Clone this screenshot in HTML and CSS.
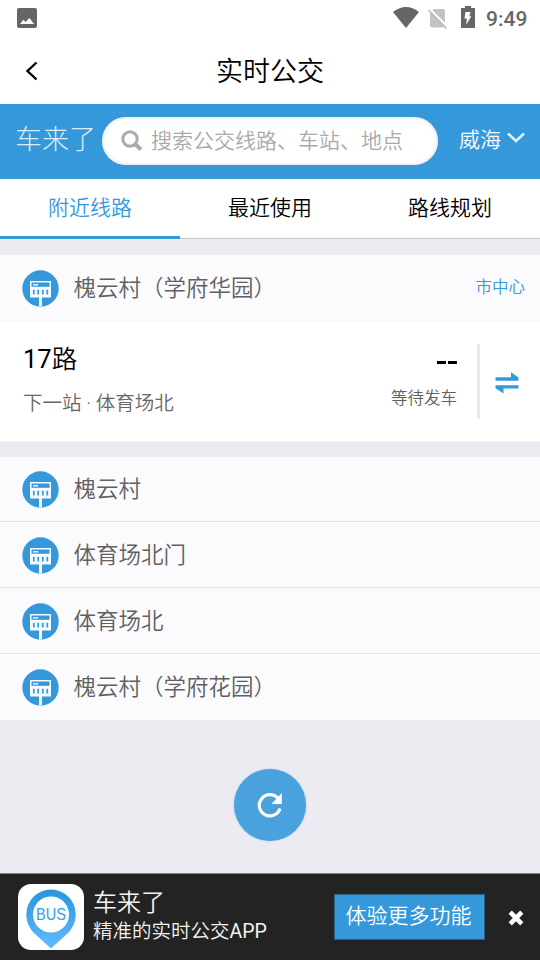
FILE: index.html
```
<!DOCTYPE html>
<html lang="zh-CN">
<head>
<meta charset="utf-8">
<title>实时公交</title>
<link rel="stylesheet" href="styles.css">
</head>
<body>
<svg width="0" height="0" class="defs">
  <symbol id="stop" viewBox="0 0 38 38">
    <circle cx="19.500" cy="19.500" r="18.2" fill="#3498db"/>
    <path d="M9 12h21v16.500h-9v9h-3v-9h-9z" fill="#f6fafe"/>
    <path d="M10.500 13.500h18v4.300h-18z" fill="#3498db"/>
    <path d="M12 15.800h5.200" stroke="#d9ecf9" stroke-width="1.600"/>
    <path d="M12.800 20.800v4.800M17.200 20.800v4.800M21.800 20.800v4.800M26.300 20.800v4.800" stroke="#3498db" stroke-width="1.700"/>
  </symbol>
</svg>
<header class="status">
  <svg class="photo" width="20" height="20" viewBox="0 0 20 20"><rect width="20" height="20" rx="2" fill="#666"/><path d="M3 16l3.500-4.200 2 2.200L12.500 10l4.500 6z" fill="#fff"/></svg>
  <div class="status-right">
    <svg width="26" height="21" viewBox="0 0 26 21"><path d="M0 5Q13-5 26 5L13 21z" fill="#666"/></svg>
    <svg class="sim" width="20" height="21" viewBox="0 0 20 21"><path d="M2 5l4-4h9q2 0 2 2v14.500q0 2-2 2H4q-2 0-2-2z" fill="#c3c3c3"/><path d="M1 .5L20 19.500" stroke="#fff" stroke-width="2.500"/><path d="M.5 2L18.500 20.500" stroke="#bdbdbd" stroke-width="1.700"/></svg>
    <svg class="battery" width="14" height="22" viewBox="0 0 14 22"><path d="M0 2h4V0h6v2h4v20H0z" fill="#666"/><path d="M4.500 6H9.500L8.300 10.200h2L5 19l1-6.500H3.500z" fill="#fff"/></svg>
    <span class="time">9:49</span>
  </div>
</header>
<div class="titlebar">
  <svg class="back" width="14" height="20" viewBox="0 0 14 20"><path d="M11.500 1.500L2.500 10l9 8.500" fill="none" stroke="#000" stroke-width="2.400"/></svg>
  <h1>实时公交</h1>
</div>
<div class="searchbar">
  <span class="logo">车来了</span>
  <div class="search">
    <svg width="22" height="22" viewBox="0 0 22 22" fill="none" stroke="#aaa"><circle cx="9" cy="9" r="7.200" stroke-width="3"/><path d="M14 14l6 5.500" stroke-width="4"/></svg>
    <span>搜索公交线路、车站、地点</span>
  </div>
  <span class="city">威海</span>
  <svg class="chevron" width="18" height="12" viewBox="0 0 18 12"><path d="M1 1.500l8 7.500 8-7.500" fill="none" stroke="#e3f1fb" stroke-width="2.500"/></svg>
</div>
<nav class="tabs">
  <span class="tab active">附近线路</span>
  <span class="tab">最近使用</span>
  <span class="tab">路线规划</span>
</nav>
<section class="group first">
  <div class="station head"><svg class="stop"><use href="#stop"/></svg><span class="name">槐云村（学府华园）</span><span class="toward">市中心</span></div>
  <div class="route">
    <div class="info"><div class="line"><span class="latin">17</span>路</div><div class="next">下一站 · 体育场北</div></div>
    <div class="eta"><div class="dash"><i></i><i></i></div><div class="wait">等待发车</div></div>
    <div class="swap"><svg width="24" height="22" viewBox="0 0 24 22" fill="#3498db"><path d="M.5 5.200H16V.300L23.500 5.500v3.200H.5zM23.500 13.200v3.200H8.500v5.100L.5 16.200v-3z"/></svg></div>
  </div>
</section>
<section class="group list">
  <div class="station"><svg class="stop"><use href="#stop"/></svg><span class="name">槐云村</span></div>
  <div class="station"><svg class="stop"><use href="#stop"/></svg><span class="name">体育场北门</span></div>
  <div class="station"><svg class="stop"><use href="#stop"/></svg><span class="name">体育场北</span></div>
  <div class="station"><svg class="stop"><use href="#stop"/></svg><span class="name">槐云村（学府花园）</span></div>
</section>
<div class="refresh">
  <svg width="28" height="28" viewBox="0 0 28 28"><path d="M22 7.500A10.600 10.600 0 1 0 24 17.500" fill="none" stroke="#fff" stroke-width="3.200"/><path d="M25.800 2v11H15.500z" fill="#fff"/></svg>
</div>
<footer class="banner">
  <svg class="app" width="66" height="66" viewBox="0 0 66 66">
    <defs><linearGradient id="pin" x1="0" y1="0" x2="0" y2="1"><stop offset="0" stop-color="#2796dc"/><stop offset="1" stop-color="#61bcff"/></linearGradient></defs>
    <rect width="66" height="66" rx="13" fill="#fff"/>
    <path d="M33 5.500A24.700 24.700 0 0 1 57.700 30.200C57.700 40 53 46 49 50L33 64.500 17 50C13 46 8.300 40 8.300 30.200A24.700 24.700 0 0 1 33 5.500z" fill="url(#pin)"/>
    <circle cx="33" cy="30.500" r="18" fill="#fff"/>
    <text x="33" y="36" text-anchor="middle" textLength="30" lengthAdjust="spacingAndGlyphs" class="bus">BUS</text>
  </svg>
  <div class="promo"><div class="promo-name">车来了</div><div class="promo-text">精准的实时公交<span class="latin">APP</span></div></div>
  <span class="more">体验更多功能</span>
  <svg class="close" width="16" height="16" viewBox="0 0 16 16"><path d="M2.200 2.200l11.600 11.600M13.800 2.200L2.200 13.800" stroke="#fff" stroke-width="4.600"/></svg>
</footer>
</body>
</html>
```
FILE: styles.css
```
* { box-sizing: border-box; }
body {
  margin: 0;
  width: 540px;
  height: 960px;
  display: flex;
  flex-direction: column;
  overflow: hidden;
  background: #ebebf1;
  font-family: Roboto, "Noto Sans CJK SC", sans-serif;
  font-weight: 350;
  color: #000;
  white-space: nowrap;
}
svg { display: block; flex: none; }
.defs { position: absolute; }
.latin { font-weight: 400; }
.status {
  height: 36px;
  background: #fff;
  display: flex;
  justify-content: space-between;
  padding: 0 12px 0 17px;
}
.photo { margin-top: 8px; }
.status-right { display: flex; padding-top: 7px; }
.sim { margin: 1px 0 0 9px; }
.battery { margin: -1px 0 0 13px; }
.time {
  margin-left: 11px;
  font-size: 21px;
  line-height: 24px;
  font-weight: 500;
  color: #666;
  width: 42px;
}
.titlebar {
  height: 68px;
  background: #fff;
  display: grid;
  grid-template-columns: 60px 1fr 60px;
  align-items: center;
}
.back { margin: 2px 0 0 25px; }
h1 { margin: 4px 0 0; font-size: 27px; line-height: 40px; font-weight: 350; text-align: center; }
.searchbar {
  height: 75px;
  background: #3498db;
  display: flex;
  align-items: flex-start;
  color: #fff;
}
.logo { width: 87px; margin: 16px 0 0 15px; font-size: 27px; line-height: 40px; color: #d8edfa; font-weight: 300; }
.search {
  width: 336px;
  height: 48px;
  margin-top: 13px;
  border-radius: 24px;
  background: #fff;
  box-shadow: inset 0 0 4px #d8d8d8;
  display: flex;
  align-items: center;
  gap: 8px;
  padding-left: 19px;
  color: #a9a9a9;
  font-size: 21px;
  line-height: 30px;
}
.city { margin: 21px 0 0 21px; font-size: 21px; line-height: 30px; }
.chevron { margin: 28px 0 0 6px; }
.tabs {
  height: 60px;
  background: #fff;
  display: grid;
  grid-template-columns: repeat(3, 1fr);
  text-align: center;
  font-size: 21px;
  line-height: 58px;
}
.tab { height: 60px; border-bottom: 1px solid #c8c8c8; }
.tab.active { color: #3498db; border-bottom: 3px solid #3498db; }
.group { margin-top: 15px; }
.group.first { margin-top: 16px; }
.station {
  height: 66px;
  background: #fbfbfe;
  border-bottom: 1px solid #e4e4e7;
  display: flex;
  align-items: center;
  padding: 0 15px 0 21px;
  color: #606060;
}
.station.head { height: 67px; border-color: #f7f7f9; }
.list .station:first-child { height: 65px; }
.list .station:last-child { height: 67px; border-color: #efeff3; }
.stop { width: 38px; height: 38px; }
.name { margin-left: 14.5px; font-size: 22.5px; line-height: 32px; flex: 1; }
.toward { color: #3498db; font-size: 16.5px; line-height: 24px; margin-top: -1px; }
.route {
  height: 120px;
  background: #fff;
  display: flex;
  align-items: center;
  border-bottom: 1px solid #f2f2f5;
}
.info { flex: 1; padding: 0 0 5px 23px; }
.line { font-size: 25.5px; line-height: 34px; }
.next { margin-top: 14px; margin-bottom: -1px; font-size: 19.5px; line-height: 28px; color: #666; }
.eta { width: 86px; padding-bottom: 10px; }
.dash { height: 36px; display: flex; justify-content: flex-end; align-items: center; gap: 2px; padding: 6px 20px 0 0; }
.dash i { width: 9px; height: 3px; background: #000; }
.wait { margin-top: 8px; font-size: 16.5px; line-height: 26px; color: #606060; }
.swap { width: 63px; height: 75px; border-left: 3px solid #eaeaea; display: flex; align-items: center; padding: 2px 0 0 15px; }
.refresh {
  width: 72px;
  height: 72px;
  margin: 47.5px auto 0;
  border-radius: 50%;
  background: #49a1dd;
  box-shadow: 0 0 2px #8fc4e8;
  display: flex;
  align-items: center;
  justify-content: center;
}
.banner {
  height: 87px;
  margin-top: auto;
  background: #232323;
  border-top: 1px solid #808084;
  display: flex;
  align-items: center;
  color: #f2f2f2;
}
.app { margin: -1px 0 0 18px; }
.bus { font-family: "Liberation Sans", sans-serif; font-size: 16px; fill: #35a0e4; font-weight: 400; }
.promo { margin: -2px 0 0 9px; width: 241px; }
.promo-name { font-size: 24px; line-height: 30px; }
.promo-text { font-size: 19.5px; line-height: 27px; }
.more {
  width: 151px;
  height: 46px;
  border: 1px solid #2b6288;
  background: #3498db;
  color: #fff;
  padding-right: 2px;
  text-align: center;
  font-size: 21px;
  line-height: 43px;
}
.close { margin: 2px 0 0 23px; }
```
